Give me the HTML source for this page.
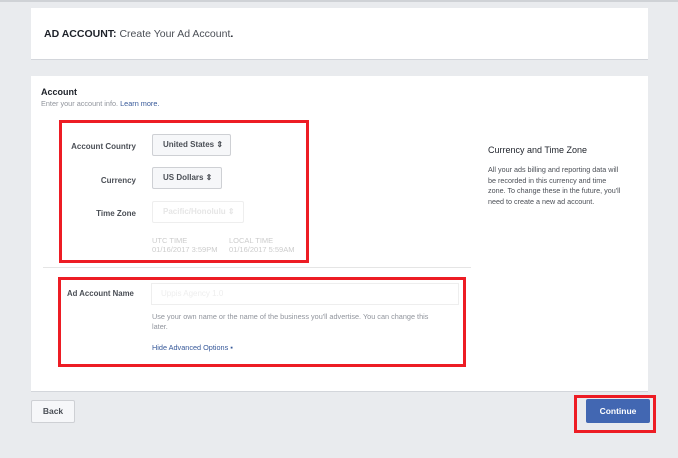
<!DOCTYPE html>
<html><head><style>
*{margin:0;padding:0;box-sizing:border-box}
body{width:678px;height:458px;background:#e9ebee;font-family:"Liberation Sans",Arial,sans-serif;position:relative;overflow:hidden;color:#1d2129}
.topbar{position:absolute;left:0;top:0;width:678px;height:2px;background:#cfd2d6}
.card{position:absolute;background:#fff;border-bottom:1px solid #d3d6db}
.abs{position:absolute}
.lbl{position:absolute;font-size:8px;font-weight:bold;color:#4b4f56;text-align:right;width:80px}
.sel{position:absolute;height:22px;border:1px solid #ced0d4;background:#f6f7f9;border-radius:2px;font-size:8px;font-weight:bold;color:#4b4f56;line-height:20px;padding-left:10px}
.red{position:absolute;border:3px solid #ed1c24}
</style></head><body>
<div class="topbar"></div>
<div class="card" style="left:31px;top:8px;width:617px;height:52px">
 <div class="abs" style="left:13px;top:20px;font-size:10.5px"><b>AD ACCOUNT:</b> <span style="color:#4b4f56">Create Your Ad Account</span><b>.</b></div>
</div>
<div class="card" style="left:31px;top:76px;width:617px;height:316px">
 <div class="abs" style="left:10px;top:11px;font-size:9px;font-weight:bold">Account</div>
 <div class="abs" style="left:10px;top:23px;font-size:7.3px;color:#90949c">Enter your account info. <span style="color:#365899">Learn more.</span></div>
 <div class="abs" style="left:12px;top:191px;width:428px;height:1px;background:#e5e5e5"></div>
 <div class="abs" style="left:457px;top:69px;font-size:9px;color:#1d2129">Currency and Time Zone</div>
 <div class="abs" style="left:457px;top:89px;width:136px;font-size:7.2px;line-height:10.5px;color:#4b4f56">All your ads billing and reporting data will be recorded in this currency and time zone. To change these in the future, you'll need to create a new ad account.</div>
</div>
<div class="lbl" style="left:56px;top:142px">Account Country</div>
<div class="sel" style="left:152px;top:134px;width:79px">United States ⇕</div>
<div class="lbl" style="left:56px;top:176px">Currency</div>
<div class="sel" style="left:152px;top:167px;width:70px">US Dollars ⇕</div>
<div class="lbl" style="left:56px;top:209px">Time Zone</div>
<div class="sel" style="left:152px;top:201px;width:92px;background:#fff;border-color:#eee;color:#e6e6e6">Pacific/Honolulu ⇕</div>
<div class="abs" style="left:152px;top:236px;font-size:7.5px;color:#ccc">UTC TIME<br>01/16/2017 3:59PM</div>
<div class="abs" style="left:229px;top:236px;font-size:7.5px;color:#ccc">LOCAL TIME<br>01/16/2017 5:59AM</div>
<div class="red" style="left:59px;top:120px;width:250px;height:143px"></div>
<div class="abs" style="left:67px;top:289px;font-size:7.8px;font-weight:bold;color:#4b4f56">Ad Account Name</div>
<div class="abs" style="left:151px;top:283px;width:308px;height:22px;border:1px solid #eee;font-size:8px;color:#eee;line-height:20px;padding-left:9px">Uppis Agency 1.0</div>
<div class="abs" style="left:152px;top:312px;width:288px;font-size:7.3px;line-height:10px;color:#90949c">Use your own name or the name of the business you'll advertise. You can change this later.</div>
<div class="abs" style="left:152px;top:343px;font-size:7.3px;color:#365899">Hide Advanced Options ▪</div>
<div class="red" style="left:58px;top:277px;width:408px;height:90px"></div>
<div class="abs" style="left:31px;top:400px;width:44px;height:23px;background:#f6f7f9;border:1px solid #ced0d4;border-radius:2px;font-size:8.5px;font-weight:bold;color:#4b4f56;text-align:center;line-height:21px">Back</div>
<div class="abs" style="left:586px;top:399px;width:64px;height:24px;background:#4267b2;border-radius:2px;font-size:8.5px;font-weight:bold;color:#fff;text-align:center;line-height:24px">Continue</div>
<div class="red" style="left:574px;top:395px;width:82px;height:38px"></div>
</body></html>
